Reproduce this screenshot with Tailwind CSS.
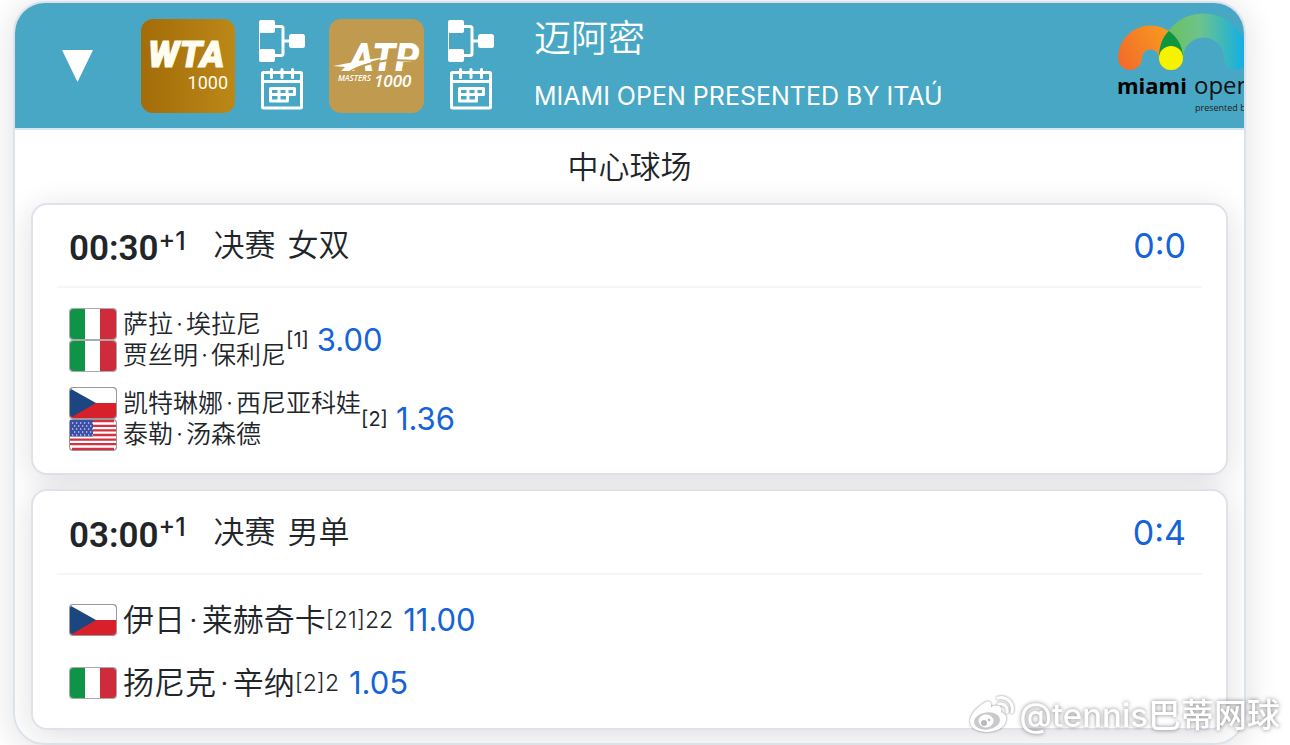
<!DOCTYPE html>
<html lang="zh-CN">

<head>
    <meta charset="UTF-8">
    <meta name="viewport" content="width=device-width, initial-scale=1.0">
    <title>迈阿密 - 赛程</title>
    <script src="https://cdn.jsdelivr.net/npm/@tailwindcss/browser@4"></script>
</head>

<body class="bg-white text-[#212529] font-['Inter','Noto_Sans_CJK_SC',sans-serif] overflow-x-hidden">

    <!-- Shared icons -->
    <svg class="hidden">
        <symbol id="draw" viewBox="0 0 46 42">
            <g fill="#fff">
                <rect x="0" y="0" width="16" height="13" rx="2" />
                <rect x="0" y="29" width="16" height="13" rx="2" />
                <rect x="30" y="14" width="16" height="14" rx="2.5" />
            </g>
            <path d="M.5 10v22" stroke="#fff" fill="none" />
            <path d="M15 6.5h7q2 0 2 2v25q0 2-2 2h-7M24 21h7" stroke="#fff" stroke-width="3" fill="none" />
        </symbol>
        <symbol id="calendar" viewBox="0 0 42 42">
            <g stroke="#fff" stroke-width="3" fill="none">
                <rect x="1.5" y="4.5" width="39" height="35.5" rx="1" />
                <path d="M2 13.5h38" />
                <path d="M10.5 1.5v8M21 1.5v8M31.5 1.5v8" stroke-linecap="round" />
                <path d="M9.5 20.5h24v6h-7v6.5h-17zM9.5 26.5h17M18 20.5v12.5M26 20.5v6" stroke-linejoin="round" />
            </g>
        </symbol>
        <symbol id="flag-it" viewBox="0 0 48 32">
            <rect width="48" height="32" rx="4" fill="#aaa" />
            <path d="M5 1h11v30H5q-4 0-4-4V5q0-4 4-4z" fill="#0f9347" />
            <path d="M16 1h15v30H16z" fill="#fff" />
            <path d="M31 1h12q4 0 4 4v22q0 4-4 4H31z" fill="#d02b3a" />
        </symbol>
        <symbol id="flag-cz" viewBox="0 0 48 32">
            <rect width="48" height="32" rx="4" fill="#999" />
            <path d="M1 16V5q0-4 4-4h38q4 0 4 4v12H1z" fill="#fff" />
            <path d="M1 16h46v11q0 4-4 4H5q-4 0-4-4z" fill="#d8202a" />
            <path d="M2 2l25 14L3 30q-2-1-2-4V4z" fill="#1c467f" />
        </symbol>
        <symbol id="flag-us" viewBox="0 0 48 32">
            <rect width="48" height="32" rx="4" fill="#999" />
            <rect x="1" y="1" width="46" height="30" rx="4" fill="#fff" />
            <path d="M3 2.2h42M1 6.8h46M1 11.4h46M1 16h46M1 20.6h46M1 25.2h46M3 29.8h42" stroke="#d3313f" stroke-width="2.3" />
            <path d="M1 1h23v16.5H1z" fill="#3b4fa4" />
            <path d="M3 4h21M5 7h19M3 10h21M5 13h19M3 16h21" stroke="#c5cbea" stroke-width="1.3" stroke-dasharray="1.3 2.7" />
        </symbol>
    </svg>

    <main class="pt-px pl-[13px] pr-11">
        <section class="border-2 border-[#dce2ea] rounded-[32px] overflow-hidden pb-[13px] shadow-[0_4px_32px_rgba(20,20,50,0.14)]">

            <!-- Tournament header -->
            <header class="flex items-center h-[127px] bg-[#48a7c4] border-b-2 border-[#d5e7f0] text-white">
                <button type="button" aria-label="收起" class="ml-[47px] mr-12 shrink-0">
                    <svg class="block w-[31px] h-8" viewBox="0 0 31 32"><path d="M0 0h31L15.5 32z" fill="#fff" /></svg>
                </button>

                <svg class="w-[94px] h-[94px] shrink-0" viewBox="0 0 94 94" role="img">
                    <defs>
                        <linearGradient id="gold">
                            <stop offset="0" stop-color="#a36c08" />
                            <stop offset="1" stop-color="#bb8818" />
                        </linearGradient>
                    </defs>
                    <rect width="94" height="94" rx="12" fill="url(#gold)" />
                    <text x="7" y="48" fill="#fffdf0" stroke="#fffdf0" font-family="Roboto" font-size="37" font-weight="900" font-style="italic">WTA</text>
                    <text x="87" y="70" text-anchor="end" fill="#fffdf0" font-family="Roboto" font-size="18">1000</text>
                </svg>
                <div class="mx-6 pb-0.5 flex flex-col items-center gap-1.5 shrink-0">
                    <a href="#" aria-label="WTA 签表"><svg class="block w-[46px] h-[42px]"><use href="#draw" /></svg></a>
                    <a href="#" aria-label="WTA 赛程"><svg class="block w-[42px] h-[42px]"><use href="#calendar" /></svg></a>
                </div>

                <svg class="w-[95px] h-[94px] shrink-0" viewBox="0 0 95 94" role="img">
                    <rect width="95" height="94" rx="12" fill="#c09a4e" />
                    <text x="20" y="52" fill="#fff" font-family="Roboto" font-size="38" font-weight="900" font-style="italic">ATP</text>
                    <path d="M15 54C30 47 44 43 60 41L92 42" stroke="#c09a4e" stroke-width="2" fill="none" />
                    <path d="M4 47C20 44 34 41 58 38C44 42 32 45 20 52L12 52L16 48z" fill="#fff" />
                    <text x="9" y="62" fill="#fff" font-family="Open Sans" font-size="8" font-weight="600" font-style="italic">MASTERS</text>
                    <text x="45" y="68" fill="#fff" font-family="Open Sans" font-size="17" font-weight="600" font-style="italic">1000</text>
                </svg>
                <div class="ml-6 mr-10 pb-0.5 flex flex-col items-center gap-1.5 shrink-0">
                    <a href="#" aria-label="ATP 签表"><svg class="block w-[46px] h-[42px]"><use href="#draw" /></svg></a>
                    <a href="#" aria-label="ATP 赛程"><svg class="block w-[42px] h-[42px]"><use href="#calendar" /></svg></a>
                </div>

                <div class="whitespace-nowrap pt-1">
                    <h1 class="text-[37px] leading-[56px] font-[350]">迈阿密</h1>
                    <p class="text-[25px] leading-[58px]">MIAMI OPEN PRESENTED BY ITAÚ</p>
                </div>

                <svg class="ml-auto w-[126px] h-[125px] shrink-0" viewBox="0 0 126 125" role="img">
                    <defs>
                        <linearGradient id="orange" gradientUnits="userSpaceOnUse" x1="0" y1="60" x2="60" y2="30">
                            <stop offset="0" stop-color="#f26a2a" />
                            <stop offset="1" stop-color="#f9a01f" />
                        </linearGradient>
                        <linearGradient id="green" gradientUnits="userSpaceOnUse" x1="45" y1="0" x2="126" y2="0">
                            <stop offset="0" stop-color="#6cbf5a" />
                            <stop offset=".45" stop-color="#6cc48a" />
                            <stop offset="1" stop-color="#14aee6" />
                        </linearGradient>
                    </defs>
                    <path d="M12 55a20.5 20.5 0 0 1 41 0" stroke="url(#orange)" stroke-width="24" stroke-linecap="round" fill="none" />
                    <path d="M53 55a32.5 32.5 0 0 1 65 0" stroke="url(#green)" stroke-width="24" stroke-linecap="round" fill="none" />
                    <path d="M51 28C44 34 41 44 41 55h24C65 43 59 34 51 28z" fill="#0f9440" />
                    <circle cx="53" cy="55" r="12" fill="#f6f200" />
                    <text x="-1" y="91" fill="#000" font-family="Open Sans" font-size="22" font-weight="700">miami</text>
                    <text x="76" y="91" fill="#111" font-family="Open Sans" font-size="24">open</text>
                    <text x="77" y="108" fill="#222" font-family="Open Sans" font-size="9">presented by</text>
                </svg>
            </header>

            <h2 class="h-[73px] leading-[73px] text-center text-[31px] font-[350]">中心球场</h2>

            <div class="mx-4 flex flex-col gap-3.5">

                <!-- Women's doubles final -->
                <article class="border-2 border-[#dfe2ea] rounded-2xl bg-white px-6 shadow-[0_6px_32px_rgba(20,20,40,0.14)]">
                    <div class="flex items-center h-[83px] px-3 border-b-2 border-[#f6f6f7]">
                        <time class="flex items-center font-['Roboto'] font-semibold text-[35px] pt-2">00:30<span class="font-['Inter'] text-[25px] font-medium pb-4">+1</span></time>
                        <h3 class="ml-7 flex gap-3 text-[31px] font-[350]"><span>决赛</span> <span>女双</span></h3>
                        <a href="#" class="ml-auto mr-1 text-[34px] text-[#1463d8]">0:0</a>
                    </div>
                    <div class="flex flex-col gap-[15px] px-3 pt-5 pb-[22px]">
                        <div class="flex items-center h-16">
                            <div class="mr-1.5">
                                <svg class="block w-12 h-8"><use href="#flag-it" /></svg>
                                <svg class="block w-12 h-8"><use href="#flag-it" /></svg>
                            </div>
                            <div class="text-[25px] leading-[31px] font-[350]">
                                <p>萨拉<span class="px-[3px]">·</span>埃拉尼</p>
                                <p>贾丝明<span class="px-[3px]">·</span>保利尼</p>
                            </div>
                            <span class="text-[20px]">[1]</span>
                            <a href="#" class="ml-2 text-[31px] text-[#1463d8]">3.00</a>
                        </div>
                        <div class="flex items-center h-16">
                            <div class="mr-1.5">
                                <svg class="block w-12 h-8"><use href="#flag-cz" /></svg>
                                <svg class="block w-12 h-8"><use href="#flag-us" /></svg>
                            </div>
                            <div class="text-[25px] leading-[31px] font-[350]">
                                <p>凯特琳娜<span class="px-[3px]">·</span>西尼亚科娃</p>
                                <p>泰勒<span class="px-[3px]">·</span>汤森德</p>
                            </div>
                            <span class="text-[20px]">[2]</span>
                            <a href="#" class="ml-2 text-[31px] text-[#1463d8]">1.36</a>
                        </div>
                    </div>
                </article>

                <!-- Men's singles final -->
                <article class="border-2 border-[#dfe2ea] rounded-2xl bg-white px-6 shadow-[0_6px_32px_rgba(20,20,40,0.14)]">
                    <div class="flex items-center h-[84px] px-3 border-b-2 border-[#f6f6f7]">
                        <time class="flex items-center font-['Roboto'] font-semibold text-[35px] pt-2">03:00<span class="font-['Inter'] text-[25px] font-medium pb-4">+1</span></time>
                        <h3 class="ml-7 flex gap-3 text-[31px] font-[350]"><span>决赛</span> <span>男单</span></h3>
                        <a href="#" class="ml-auto mr-1 text-[34px] text-[#1463d8]">0:4</a>
                    </div>
                    <div class="flex flex-col gap-[31px] px-3 pt-[29px] pb-[29px]">
                        <div class="flex items-center h-8">
                            <svg class="block w-12 h-8 mr-1.5"><use href="#flag-cz" /></svg>
                            <span class="text-[31px] font-[350]">伊日<span class="px-1">·</span>莱赫奇卡</span>
                            <span class="text-[23px] font-[350]">[21]22</span>
                            <a href="#" class="ml-2.5 text-[31px] text-[#1463d8]">11.00</a>
                        </div>
                        <div class="flex items-center h-8">
                            <svg class="block w-12 h-8 mr-1.5"><use href="#flag-it" /></svg>
                            <span class="text-[31px] font-[350]">扬尼克<span class="px-1">·</span>辛纳</span>
                            <span class="text-[23px] font-[350]">[2]2</span>
                            <a href="#" class="ml-2.5 text-[31px] text-[#1463d8]">1.05</a>
                        </div>
                    </div>
                </article>
            </div>
        </section>
    </main>

    <!-- Watermark over the page corner -->
    <div class="fixed right-2.5 bottom-1.5 flex items-center gap-1 text-white text-[33px] font-medium leading-[48px] whitespace-nowrap pointer-events-none [text-shadow:0_0_4px_rgba(0,0,0,0.5)]">
        <svg class="w-[46px] h-10 drop-shadow-[0_0_1px_rgba(0,0,0,0.5)]" viewBox="0 0 46 40">
            <path d="M15 8c5-3 8-1 7 4 7-3 12-1 10 5 5 2 6 5 5 9-2 7-10 11-19 11C8 37 1 33 1 26 1 20 8 12 15 8z" fill="#fff" />
            <ellipse cx="18" cy="26" rx="13" ry="8.5" fill="#c9c9cb" transform="rotate(-8 18 26)" />
            <ellipse cx="17" cy="26" rx="7.5" ry="6.5" fill="#fff" />
            <circle cx="15" cy="28" r="3" fill="#b9b9bb" />
            <circle cx="20" cy="25" r="1.3" fill="#b9b9bb" />
            <path d="M29 3c9-2 16 5 14 14M30 9c5-1 9 3 8 8" stroke="#fff" stroke-width="3.2" stroke-linecap="round" fill="none" />
        </svg>
        <span>@tennis巴蒂网球</span>
    </div>

</body>

</html>
